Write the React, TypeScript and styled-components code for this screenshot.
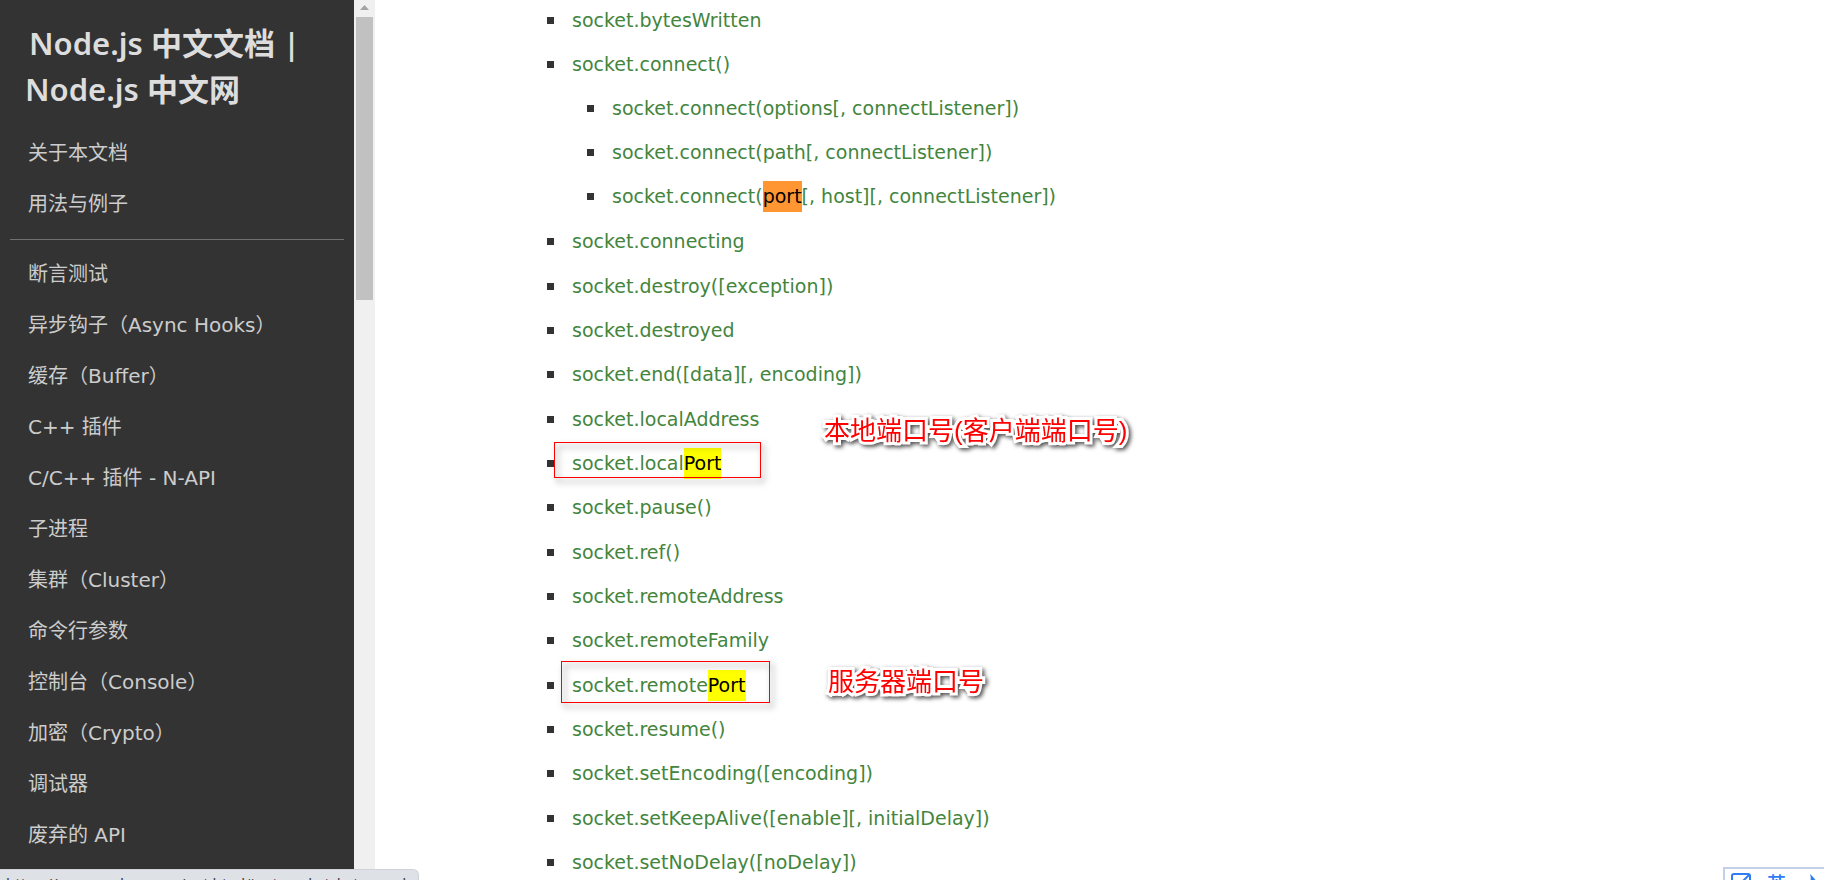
import React from 'react';
import styled, { createGlobalStyle } from 'styled-components';

const GlobalStyle = createGlobalStyle`
  * { box-sizing: border-box; }
  body {
    margin: 0;
    overflow: hidden;
    background: #fff;
    color: #333;
    font-family: "DejaVu Sans", "Noto Sans CJK SC", sans-serif;
  }
  ul { list-style: none; margin: 0; padding: 0; }
  a { color: inherit; text-decoration: none; }
`;

const Page = styled.div`
  display: flex;
  height: 100vh;
`;

const Sidebar = styled.aside`
  display: flex;
  flex: 0 0 375px;
  overflow: hidden;
`;

const SidebarBody = styled.div`
  flex: 1;
  padding: 20px 10px 0;
  background: #333;
  color: #ccc;
`;

const Title = styled.h1`
  margin: 0 0 16px;
  padding: 0 15px;
  text-indent: 4px;
  color: #ddd;
  font: 600 31px/46px "Noto Sans", "Noto Sans CJK SC", sans-serif;
`;

const Divider = styled.hr`
  margin: 9px 0;
  border: 0;
  border-top: 1px solid #707070;
`;

const NavItem = styled.li`
  padding: 10px 18px 11px;
  font-size: 20px;
  line-height: 30px;
  white-space: nowrap;
`;

const ScrollTrack = styled.div`
  flex: 0 0 21px;
  padding: 0 2px;
  background: #f0f0f0;
`;

const ScrollUp = styled.svg`
  display: block;
  width: 17px;
  height: 17px;
`;

const ScrollThumb = styled.div`
  height: 283px;
  background: #c1c1c1;
`;

const Content = styled.main`
  flex: 1;
  padding: 5px 40px 0 172px;
  overflow: hidden;
`;

const EntryList = styled.ul<{ $nested?: boolean }>`
  padding-left: ${(p) => (p.$nested ? 40 : 0)}px;
`;

const Entry = styled.li`
  &:nth-child(3n) { margin-bottom: 1px; }
`;

const EntryRow = styled.div`
  position: relative;
  display: flex;
  align-items: center;
  gap: 18px;
  height: 44px;
  padding-bottom: 14px;
  &::before {
    content: "";
    width: 7px;
    height: 7px;
    background: #333;
  }
`;

const EntryLink = styled.a`
  && { color: #43853d; }
  font-size: 19px;
  line-height: 30px;
  white-space: nowrap;
`;

const Hit = styled.mark<{ $active?: boolean }>`
  padding: 4px 0 5px;
  color: #000;
  background: ${(p) => (p.$active ? '#ff9632' : '#ff0')};
`;

const Frame = styled.span<{ $left: number; $top: number; $width: number; $height: number }>`
  position: absolute;
  left: ${(p) => p.$left}px;
  top: ${(p) => p.$top}px;
  width: ${(p) => p.$width}px;
  height: ${(p) => p.$height}px;
  border: 1px solid #f00;
  filter: drop-shadow(3px 4px 3px rgba(0, 0, 0, 0.6));
`;

const Note = styled.strong<{ $left: number; $top: number }>`
  position: absolute;
  left: ${(p) => p.$left}px;
  top: ${(p) => p.$top}px;
  color: #f00;
  font: 400 26px/38px "Liberation Sans", "Noto Sans CJK SC", sans-serif;
  white-space: nowrap;
  paint-order: stroke fill;
  -webkit-text-stroke: 6px #fff;
  stroke-linejoin: round;
  filter: drop-shadow(2px 2px 2px rgba(0, 0, 0, 0.7));
`;

const StatusBubble = styled.div`
  position: fixed;
  left: 0;
  bottom: -19px;
  height: 30px;
  padding: 0 12px 0 6px;
  border: solid #d0d2d6;
  border-width: 1px 1px 0 0;
  border-top-right-radius: 6px;
  background: #dee1e6;
  color: #3c4043;
  font: 15px/26px "Noto Sans", sans-serif;
  white-space: nowrap;
`;

const InputBar = styled.div`
  position: fixed;
  right: 0;
  bottom: -23px;
  display: flex;
  gap: 16px;
  width: 101px;
  height: 36px;
  padding: 2px 0 0 6px;
  border: solid #c3cee9;
  border-width: 2px 0 0 2px;
  background: #fff;
  color: #2f7cf6;
  font: 500 19px/24px "Noto Sans CJK SC", sans-serif;
  svg { flex: none; }
`;

const guides = ['关于本文档', '用法与例子'];
const modules = [
  '断言测试', '异步钩子（Async Hooks）', '缓存（Buffer）', 'C++ 插件', 'C/C++ 插件 - N-API',
  '子进程', '集群（Cluster）', '命令行参数', '控制台（Console）', '加密（Crypto）', '调试器', '废弃的 API',
];

type Item = {
  text: string;
  hit?: string;
  rest?: string;
  active?: boolean;
  children?: Item[];
  frame?: [number, number, number, number];
  note?: { text: string; left: number; top: number };
};

const items: Item[] = [
  { text: 'socket.bytesWritten' },
  {
    text: 'socket.connect()',
    children: [
      { text: 'socket.connect(options[, connectListener])' },
      { text: 'socket.connect(path[, connectListener])' },
      { text: 'socket.connect(', hit: 'port', rest: '[, host][, connectListener])', active: true },
    ],
  },
  { text: 'socket.connecting' },
  { text: 'socket.destroy([exception])' },
  { text: 'socket.destroyed' },
  { text: 'socket.end([data][, encoding])' },
  { text: 'socket.localAddress' },
  {
    text: 'socket.local', hit: 'Port',
    frame: [7, -6, 207, 36],
    note: { text: '本地端口号(客户端端口号)', left: 277, top: -36 },
  },
  { text: 'socket.pause()' },
  { text: 'socket.ref()' },
  { text: 'socket.remoteAddress' },
  { text: 'socket.remoteFamily' },
  {
    text: 'socket.remote', hit: 'Port',
    frame: [14, -9, 209, 42],
    note: { text: '服务器端口号', left: 281, top: -7 },
  },
  { text: 'socket.resume()' },
  { text: 'socket.setEncoding([encoding])' },
  { text: 'socket.setKeepAlive([enable][, initialDelay])' },
  { text: 'socket.setNoDelay([noDelay])' },
];

function Entries({ list, nested }: { list: Item[]; nested?: boolean }) {
  return (
    <EntryList $nested={nested}>
      {list.map((item) => (
        <Entry key={item.text}>
          <EntryRow>
            <EntryLink href="#">
              {item.text}
              {item.hit && <Hit $active={item.active}>{item.hit}</Hit>}
              {item.rest}
            </EntryLink>
            {item.frame && (
              <Frame $left={item.frame[0]} $top={item.frame[1]} $width={item.frame[2]} $height={item.frame[3]} />
            )}
            {item.note && <Note $left={item.note.left} $top={item.note.top}>{item.note.text}</Note>}
          </EntryRow>
          {item.children && <Entries list={item.children} nested />}
        </Entry>
      ))}
    </EntryList>
  );
}

function NavList({ names }: { names: string[] }) {
  return (
    <ul>
      {names.map((name) => (
        <NavItem key={name}><a href="#">{name}</a></NavItem>
      ))}
    </ul>
  );
}

export default function App() {
  return (
    <>
      <GlobalStyle />
      <Page>
        <Sidebar>
          <SidebarBody>
            <Title>Node.js 中文文档 | Node.js 中文网</Title>
            <nav>
              <NavList names={guides} />
              <Divider />
              <NavList names={modules} />
            </nav>
          </SidebarBody>
          <ScrollTrack>
            <ScrollUp viewBox="0 0 17 17"><path d="M4 10 L8.5 5 L13 10Z" fill="#a3a3a3" /></ScrollUp>
            <ScrollThumb />
          </ScrollTrack>
        </Sidebar>
        <Content>
          <Entries list={items} />
        </Content>
      </Page>
      <StatusBubble>https://www.nodeapp.cn/net.html#net_socket_bytesread</StatusBubble>
      <InputBar>
        <svg width="20" height="24" viewBox="0 0 20 24" fill="none" stroke="currentColor" strokeWidth="2">
          <rect x="1" y="3" width="18" height="18" rx="2" />
          <path d="M6 16 L18 4" />
        </svg>
        <span>英</span>
        <svg width="20" height="24" viewBox="0 0 20 24" fill="currentColor">
          <path d="M8 3 C12 7 15 10 17 15 C12 20 5 18 3 14 C8 14 10 9 8 3Z" />
        </svg>
      </InputBar>
    </>
  );
}
